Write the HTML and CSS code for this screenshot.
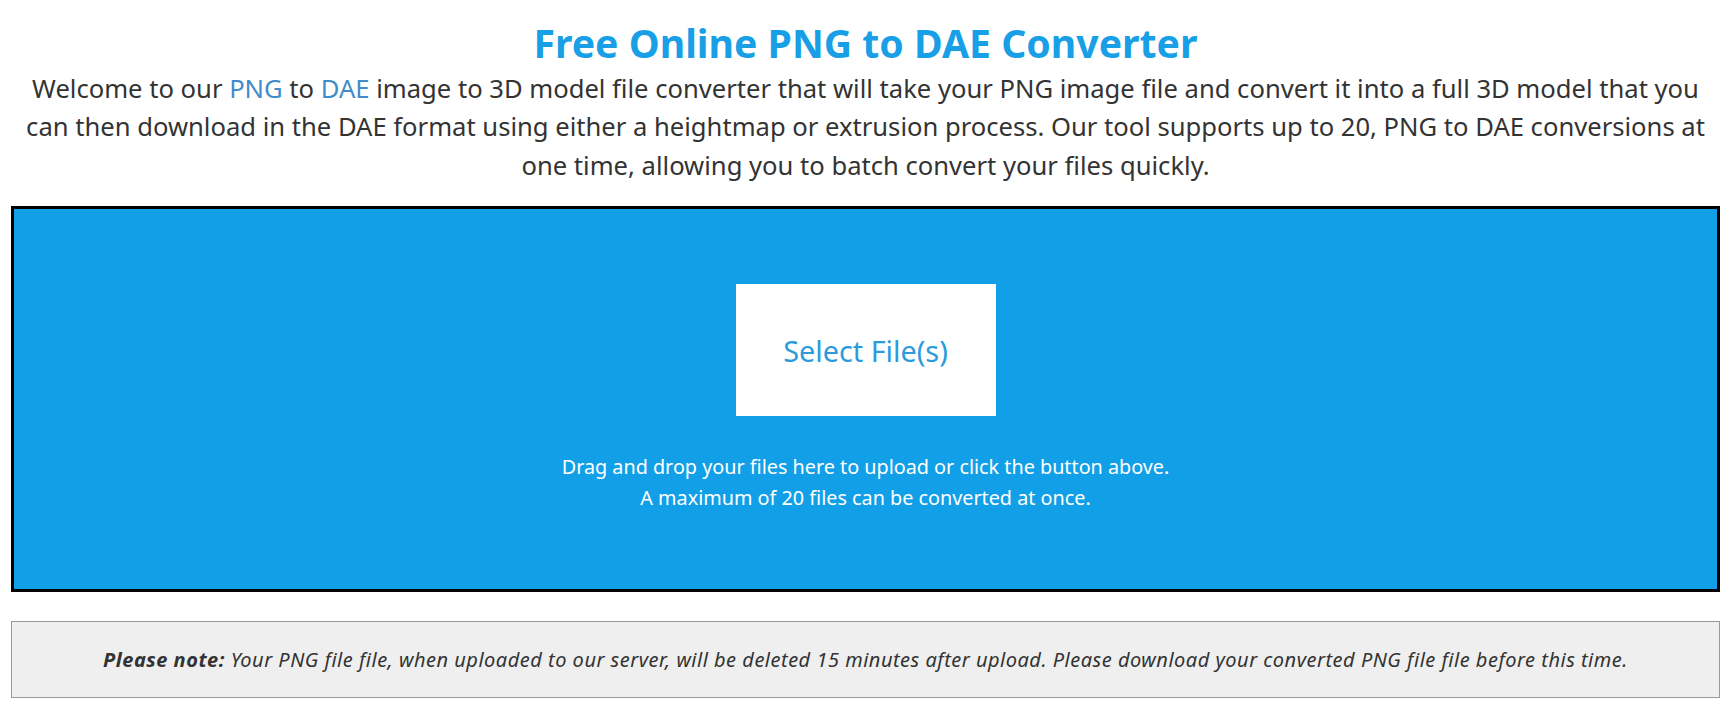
FILE: index.html
```html
<!DOCTYPE html>
<html lang="en">
<head>
<meta charset="utf-8">
<title>Free Online PNG to DAE Converter</title>
<link rel="stylesheet" href="styles.css">
</head>
<body>
<main class="page">
  <h1 class="title">Free Online PNG to DAE Converter</h1>
  <p class="intro">Welcome to our <a href="#" class="link">PNG</a> to <a href="#" class="link">DAE</a> image to 3D model file converter that will take your PNG image file and convert it into a full 3D model that you can then download in the DAE format using either a heightmap or extrusion process. Our tool supports up to 20, PNG to DAE conversions at one time, allowing you to batch convert your files quickly.</p>

  <section class="dropzone">
    <button class="select-btn" type="button">Select File(s)</button>
    <p class="drop-text">Drag and drop your files here to upload or click the button above.<br>A maximum of 20 files can be converted at once.</p>
  </section>

  <div class="note">
    <p class="note-text"><strong>Please note:</strong> Your PNG file file, when uploaded to our server, will be deleted 15 minutes after upload. Please download your converted PNG file file before this time.</p>
  </div>
</main>
</body>
</html>
```

FILE: styles.css
```css
html, body {
  margin: 0;
  padding: 0;
  background: #ffffff;
}

body {
  font-family: "Noto Sans", "DejaVu Sans", sans-serif;
  color: #333333;
}

.page {
  padding: 0 13px 0 11px;
}

.title {
  margin: 19px 0 0;
  font-size: 39.2px;
  font-weight: 700;
  line-height: 48px;
  color: #189fe6;
  text-align: center;
}

.intro {
  margin: 3px 0 0;
  padding: 0 6px;
  font-size: 25.6px;
  line-height: 38.4px;
  text-align: center;
  color: #333333;
}

.link {
  color: #428bca;
  text-decoration: none;
}

.dropzone {
  margin-top: 21px;
  border: 3px solid #000000;
  background: #119fe8;
  padding: 75px 0 75px;
  display: flex;
  flex-direction: column;
  align-items: center;
}

.select-btn {
  width: 260px;
  height: 132px;
  border: none;
  background: #ffffff;
  color: #2b9bdc;
  font-family: "Noto Sans", "DejaVu Sans", sans-serif;
  font-size: 28.8px;
  padding: 0;
  cursor: pointer;
}

.drop-text {
  margin: 36px 0 0;
  font-size: 19.8px;
  line-height: 30.7px;
  color: #ffffff;
  text-align: center;
}

.note {
  margin-top: 29px;
  border: 1px solid #999999;
  background: #efefef;
  padding: 22px 10px;
}

.note-text {
  margin: 0;
  font-size: 20px;
  line-height: 31px;
  font-style: italic;
  letter-spacing: 0.5px;
  text-align: center;
  color: #333333;
}

.note-text strong {
  font-weight: 700;
}
```
